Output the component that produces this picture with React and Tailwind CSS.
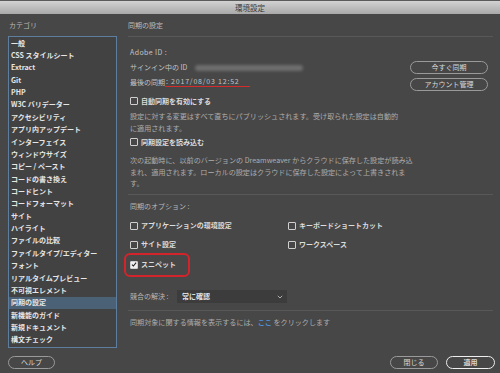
import React from "react";

const items = [
  "一般",
  "CSS スタイルシート",
  "Extract",
  "Git",
  "PHP",
  "W3C バリデーター",
  "アクセシビリティ",
  "アプリ内アップデート",
  "インターフェイス",
  "ウィンドウサイズ",
  "コピー / ペースト",
  "コードの書き換え",
  "コードヒント",
  "コードフォーマット",
  "サイト",
  "ハイライト",
  "ファイルの比較",
  "ファイルタイプ/エディター",
  "フォント",
  "リアルタイムプレビュー",
  "不可視エレメント",
  "同期の設定",
  "新機能のガイド",
  "新規ドキュメント",
  "構文チェック",
];

const FONT = { fontFamily: '"Noto Sans CJK JP", "Noto Sans", sans-serif' };

function Box({ checked }) {
  return (
    <div
      className={
        "w-[8px] h-[8px] border border-[#cfcfcf] rounded-[1px] flex items-center justify-center shrink-0 " +
        (checked ? "bg-[#f0f0f0]" : "bg-transparent")
      }
    >
      {checked && (
        <svg width="7" height="7" viewBox="0 0 8 8">
          <path d="M1.3 4.2 L3.2 6 L6.8 1.5" fill="none" stroke="#222" strokeWidth="1.4" />
        </svg>
      )}
    </div>
  );
}

function Check({ label, checked }) {
  return (
    <div className="flex items-center gap-[3px] h-[14px]">
      <Box checked={checked} />
      <span className="text-[7px] font-bold text-[#dcdcdc] leading-none">{label}</span>
    </div>
  );
}

function Pill({ children, strong, className = "" }) {
  return (
    <div
      className={
        "h-[13px] rounded-full flex items-center justify-center text-[7px] leading-none text-[#d8d8d8] " +
        (strong ? "border-[1.5px] border-[#eeeeee] font-bold" : "border border-[#9a9a9a]") +
        " " +
        className
      }
    >
      {children}
    </div>
  );
}

export default function App() {
  return (
    <div style={FONT} className="w-[500px] h-[373px] bg-[#474747] flex flex-col overflow-hidden">
      {/* title bar */}
      <div className="h-[14px] shrink-0 border-t border-[#5a5a5a] bg-gradient-to-b from-[#d2d2d2] to-[#a9a9a9] flex items-center justify-center">
        <span className="text-[7.5px] text-[#3a3a3a] leading-none">環境設定</span>
      </div>

      {/* body */}
      <div className="flex h-[336px] shrink-0">
        {/* left */}
        <div className="w-[118px] pl-[8px] shrink-0 flex flex-col">
          <div className="h-[22px] flex items-center pl-[1px] text-[7px] text-[#b8b8b8] leading-none">カテゴリ</div>
          <div className="w-[109px] h-[312px] border border-[#5d7e9e] bg-[#424242] flex flex-col">
            {items.map((it) => (
              <div
                key={it}
                className={
                  "h-[12.36px] flex items-center pl-[2px] text-[7px] font-bold leading-none text-[#e6e6e6] " +
                  (it === "同期の設定" ? "bg-[#4b6176]" : "")
                }
              >
                {it}
              </div>
            ))}
          </div>
        </div>

        {/* right */}
        <div className="flex-1 pl-[10px] pr-[7px] flex flex-col">
          <div className="h-[23px] flex items-center border-b border-[#585858] text-[7px] text-[#bdbdbd] leading-none">
            同期の設定
          </div>

          <div className="pl-[2px] flex flex-col">
            <div className="flex mt-[8px]">
              <div className="flex-1 flex flex-col text-[7px] text-[#c4c4c4] leading-none">
                <div className="h-[15px] flex items-center tracking-[0.4px]">Adobe ID :</div>
                <div className="h-[15px] flex items-center gap-[8px]">
                  <span>サインイン中の ID</span>
                  <div className="w-[108px] h-[6px] rounded-full bg-[#6e6e6e] blur-[1.5px]" />
                </div>
                <div className="h-[15px] flex items-center">
                  <span>最後の同期</span>
                  <span className="border-b-[1.5px] border-[#d42b2b] pb-[1px] pl-[1px] pr-[10px] tracking-[0.8px]">: 2017/08/03 12:52</span>
                </div>
              </div>
              <div className="w-[78px] mr-[5px] mt-[16px] flex flex-col gap-[4px]">
                <Pill>今すぐ同期</Pill>
                <Pill>アカウント管理</Pill>
              </div>
            </div>

            <div className="mt-[3px]">
              <Check label="自動同期を有効にする" />
            </div>
            <div className="mt-[2px] text-[7.1px] leading-[12px] text-[#adadad]">
              設定に対する変更はすべて直ちにパブリッシュされます。受け取られた設定は自動的
              <br />
              に適用されます。
            </div>
            <div className="mt-[1px]">
              <Check label="同期設定を読み込む" />
            </div>
            <div className="mt-[6px] text-[7.1px] leading-[11.5px] text-[#adadad]">
              次の起動時に、以前のバージョンの Dreamweaver からクラウドに保存した設定が読み込
              <br />
              まれ、適用されます。ローカルの設定はクラウドに保存した設定によって上書きされま
              <br />
              す。
            </div>
          </div>

          <div className="mt-[4px] border-t border-[#585858]" />

          <div className="pl-[2px] flex flex-col">
            <div className="mt-[5px] h-[14px] flex items-center text-[7px] text-[#b8b8b8] leading-none">同期のオプション :</div>
            <div className="mt-[5px] flex">
              <div className="w-[158px]"><Check label="アプリケーションの環境設定" /></div>
              <Check label="キーボードショートカット" />
            </div>
            <div className="mt-[5px] flex">
              <div className="w-[158px]"><Check label="サイト設定" /></div>
              <Check label="ワークスペース" />
            </div>
            <div className="mt-[6px] flex">
              <div className="relative">
                <Check label="スニペット" checked />
                <div className="absolute left-[-6px] top-[-5px] w-[66px] h-[24px] rounded-[6px] border-2 border-[#d3242c]" />
              </div>
            </div>

            <div className="mt-[18px] h-[14px] flex items-center gap-[8px]">
              <span className="text-[7px] text-[#b8b8b8] leading-none w-[39px]">競合の解決 :</span>
              <div className="w-[110px] h-[13px] bg-[#3c3c3c] flex items-center justify-between pl-[5px] pr-[4px]">
                <span className="text-[7px] font-bold text-[#e0e0e0] leading-none">常に確認</span>
                <svg width="6" height="4" viewBox="0 0 6 4">
                  <path d="M0.8 0.8 L3 3 L5.2 0.8" fill="none" stroke="#bdbdbd" strokeWidth="0.9" />
                </svg>
              </div>
            </div>
          </div>

          <div className="mt-[6px] border-t border-[#585858]" />

          <div className="pl-[2px] mt-[5px] h-[14px] flex items-center text-[7.1px] text-[#adadad] leading-none">
            同期対象に関する情報を表示するには、<span className="text-[#4f8fd6] font-bold">ここ</span>&nbsp;をクリックします
          </div>
        </div>
      </div>

      {/* footer */}
      <div className="flex-1 flex items-start pt-[6px] pl-[8px] pr-[5px]">
        <Pill className="w-[47px]">ヘルプ</Pill>
        <div className="flex-1" />
        <Pill className="w-[48px]">閉じる</Pill>
        <Pill strong className="w-[49px] ml-[8px]">適用</Pill>
      </div>
    </div>
  );
}
